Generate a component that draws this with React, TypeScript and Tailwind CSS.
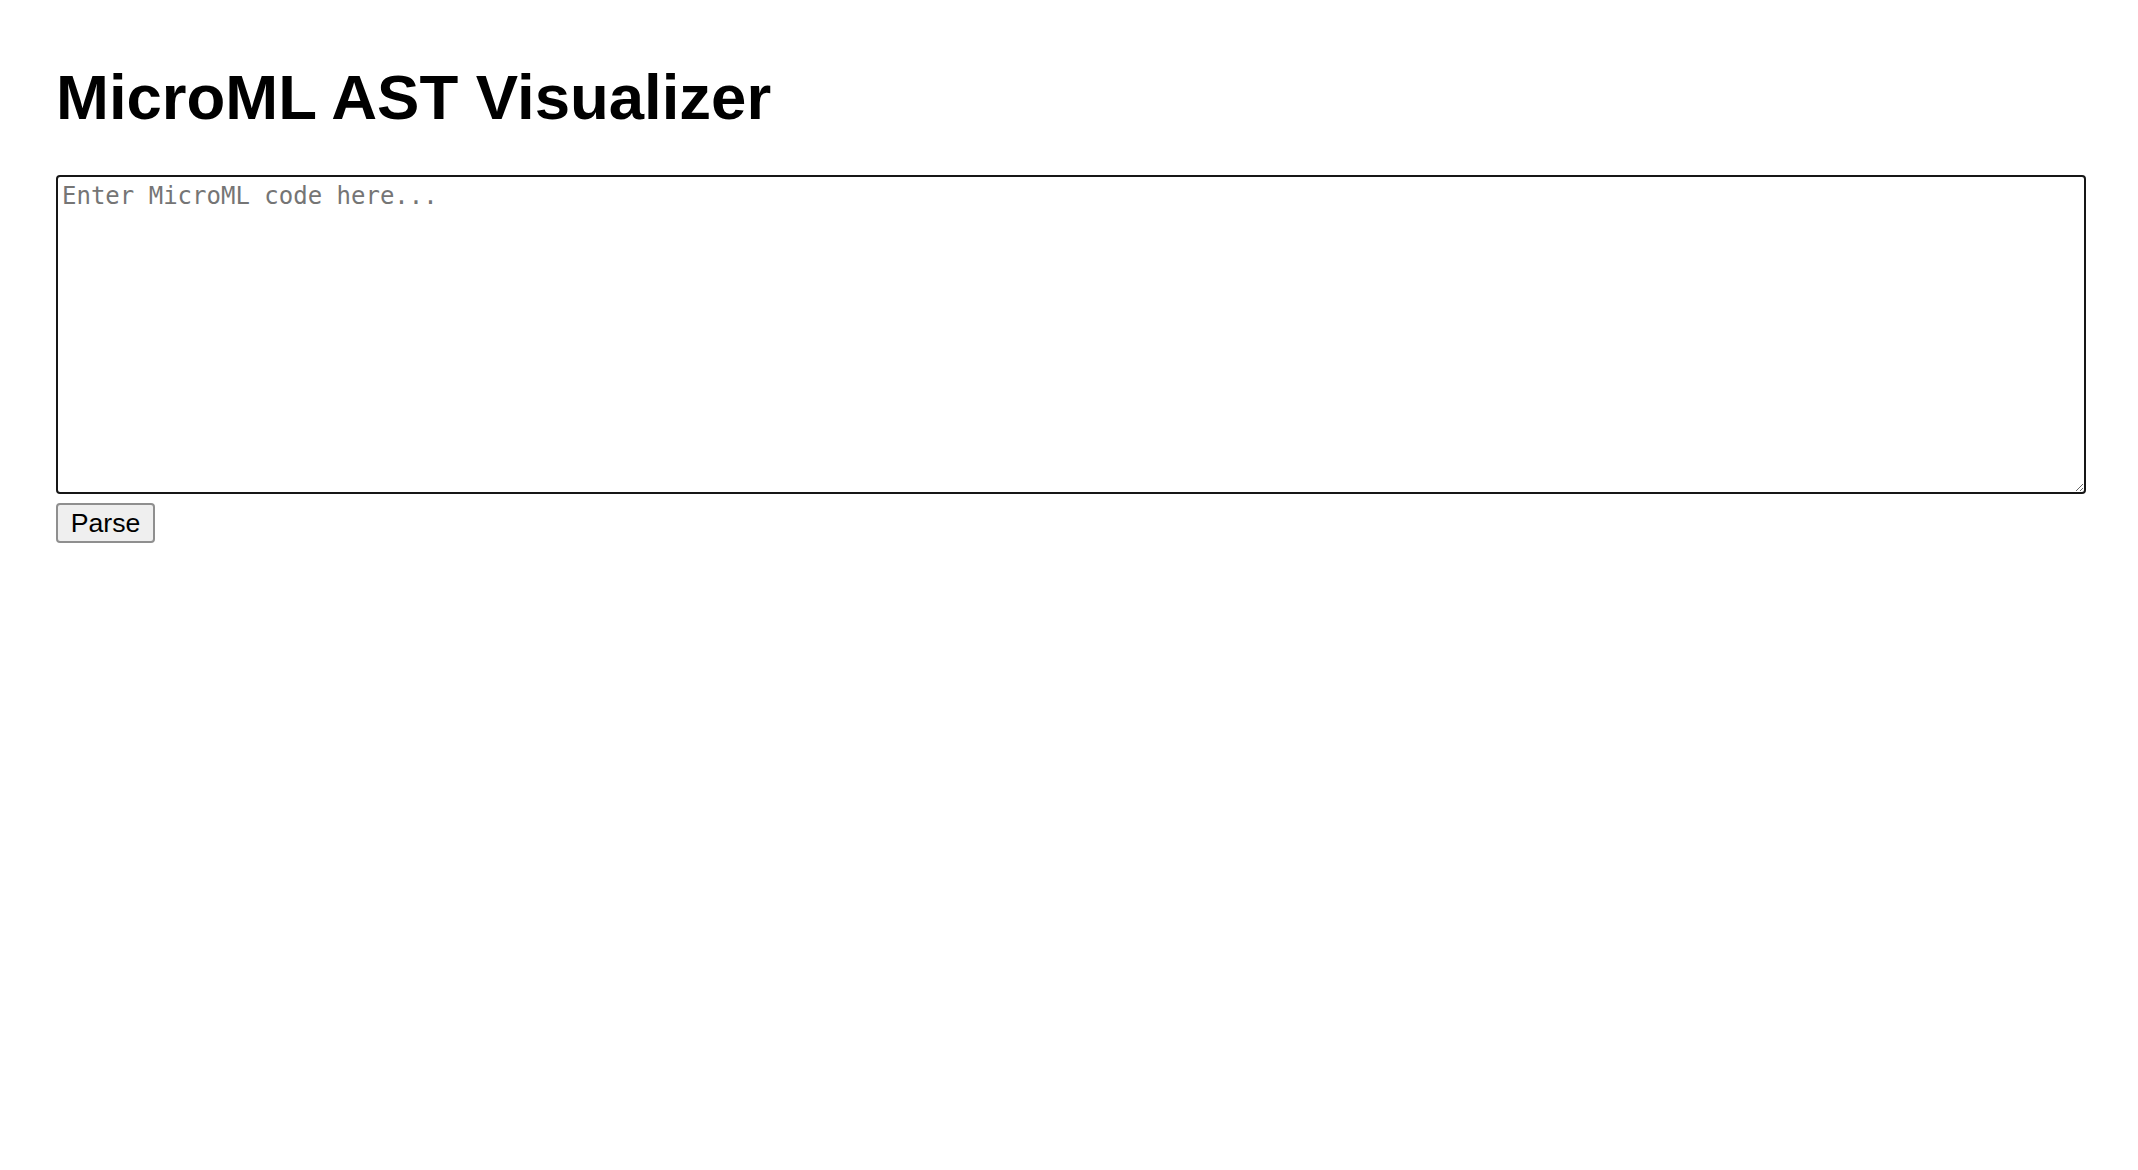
import { useState } from "react"

export default function App() {
  const [code, setCode] = useState("")

  return (
    <div className="min-h-screen bg-white px-[56px] pt-[60px] font-['Liberation_Sans',Arial,sans-serif] text-black">
      <h1 className="m-0 text-[63.5px] font-bold leading-[74px]">MicroML AST Visualizer</h1>
      <textarea
        autoFocus
        value={code}
        onChange={(e) => setCode(e.target.value)}
        placeholder="Enter MicroML code here..."
        className="mt-[41px] block h-[319px] w-[2030px] rounded-[4px] border-[2.5px] border-[#161616] px-[4px] pt-[5px] pb-[4px] font-['DejaVu_Sans_Mono',monospace] text-[24px] leading-[28px] text-black outline-none placeholder:text-[#757575]"
      />
      <button
        type="button"
        className="mt-[9px] flex h-[40px] w-[99px] items-center justify-center rounded-[4px] border-2 border-[#8f8f8f] bg-[#efefef] text-[26.67px] leading-none text-black"
      >
        Parse
      </button>
    </div>
  )
}
